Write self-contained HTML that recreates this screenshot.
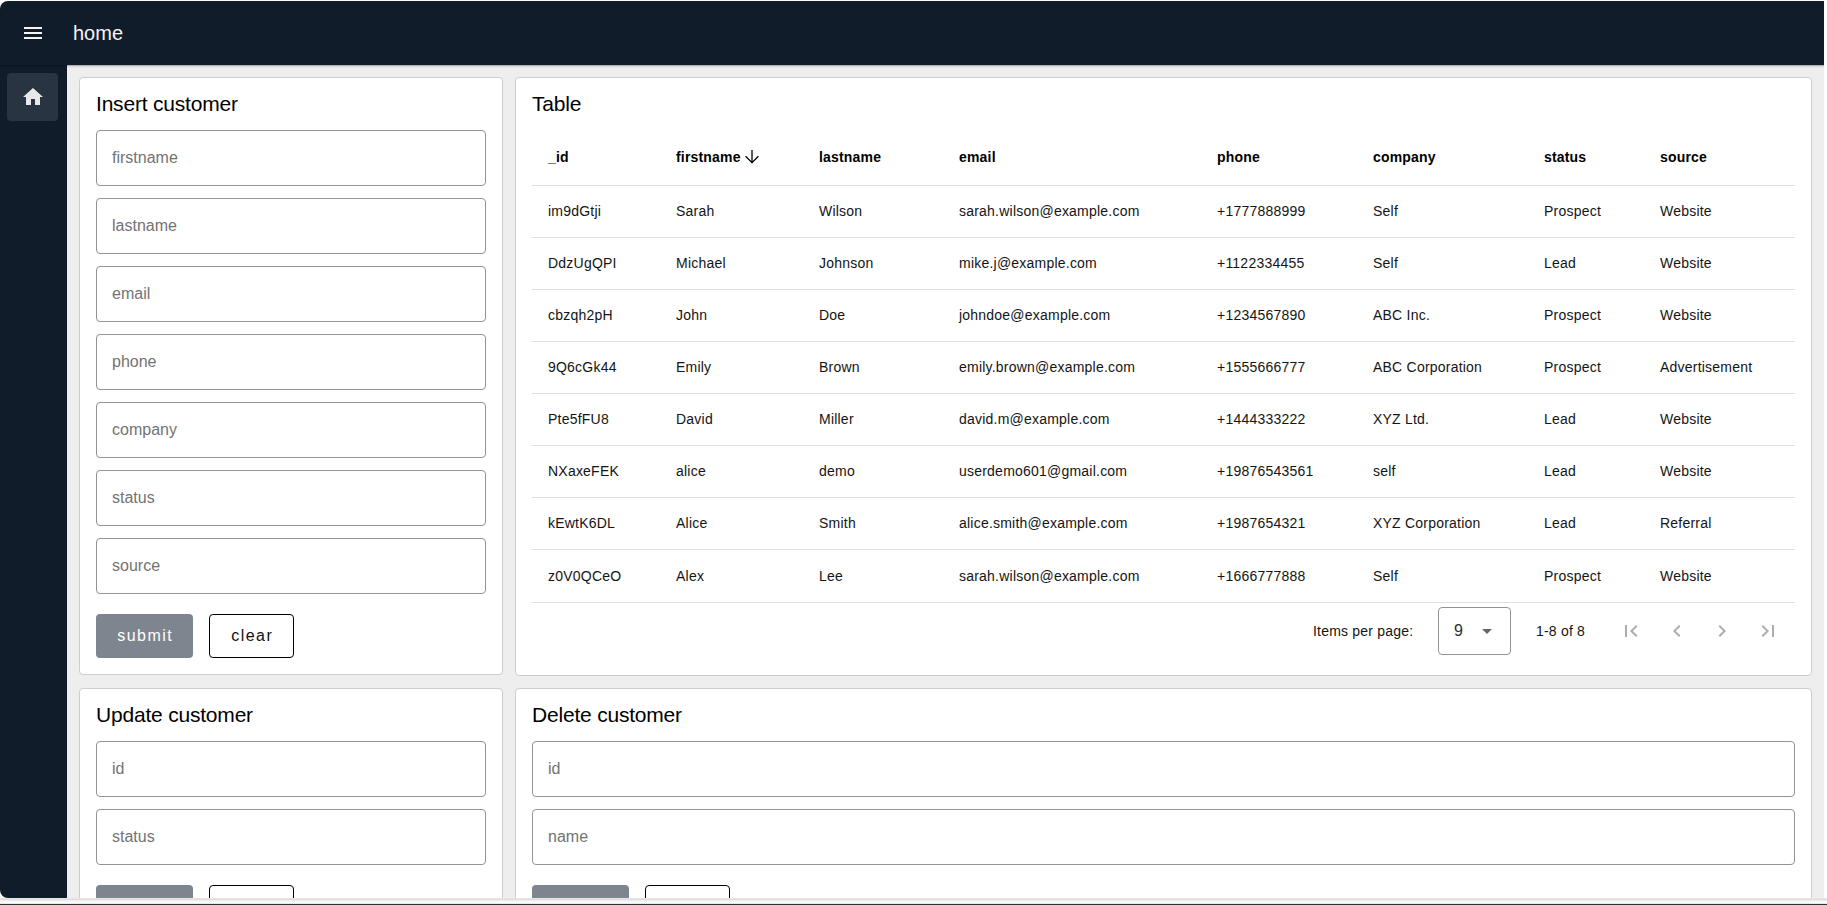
<!DOCTYPE html>
<html><head><meta charset="utf-8">
<style>
*{box-sizing:border-box;margin:0;padding:0}
html,body{width:1827px;height:905px;overflow:hidden;background:#fdfdfd;font-family:"Liberation Sans",sans-serif;color:#000}
.abs{position:absolute}
#win{position:absolute;left:0;top:1px;width:1824px;height:897px;border-radius:8px 0 0 8px;overflow:hidden;background:#eeeeee}
#hdr{position:absolute;left:0;top:0;width:1824px;height:64px;background:#111c2b}
#side{position:absolute;left:0;top:64px;width:67px;height:833px;background:#111c2b}
#homebtn{position:absolute;left:7px;top:8px;width:51px;height:48px;border-radius:4px;background:#283442}
#title{position:absolute;left:73px;top:22px;font-size:20px;line-height:20px;color:#f4f4f4;white-space:nowrap}
.card{position:absolute;background:#fff;border:1px solid #cdcdcd;border-radius:4px;overflow:hidden}
.ct{position:absolute;left:16px;top:14px;font-size:21px;line-height:24px;white-space:nowrap;letter-spacing:-0.2px}
.inp{position:absolute;height:56px;border:1px solid #939393;border-radius:4px;font-size:16px;line-height:54px;padding-left:15px;color:#737373;white-space:nowrap}
.btn{position:absolute;height:44px;border-radius:4px;padding-left:1.5px;font-size:16px;line-height:44px;text-align:center;letter-spacing:1.5px;white-space:nowrap}
.sub{background:#7d858f;color:#fff}
.clr{border:1px solid #000;color:#111;line-height:42px;border-radius:4px}
.tr{position:absolute;left:16px;width:1263px;border-bottom:1px solid #e0e0e0;font-size:14px;color:#141414;letter-spacing:0.22px}
.tr span{position:absolute;top:0;white-space:nowrap}
.th{font-weight:bold;color:#000;letter-spacing:0.18px}
.tr{line-height:51px}
.th{line-height:55px}
.pag{position:absolute;left:-516px;top:525px;width:1827px;height:56px;font-size:14px;line-height:56px;color:#141414;letter-spacing:0.2px}
.sel{position:absolute;left:1438px;top:4px;width:73px;height:48px;border:1px solid #939393;border-radius:4px;line-height:46px}
.pi{top:16px;fill:#abaeab}
#bot{position:absolute;left:0;top:898px;width:1827px;height:7px}
</style></head><body>
<div id="win">
  <div id="hdr">
    <svg class="abs" style="left:21px;top:20px" width="24" height="24" viewBox="0 0 24 24"><path fill="#f4f4f4" d="M3 18h18v-2H3v2zm0-5h18v-2H3v2zm0-7v2h18V6H3z"/></svg>
    <div id="title">home</div>
  </div>
  <div class="abs" style="left:67px;top:64px;width:1757px;height:1px;background:#b2b2b2"></div>
  <div class="abs" style="left:67px;top:65px;width:1757px;height:1px;background:#d9d9d9"></div>
  <div class="abs" style="left:67px;top:66px;width:1757px;height:1px;background:#e8e8e8"></div>
  <div id="side">
  <div class="abs" style="left:0;top:0;width:67px;height:1px;background:#0b1421"></div>
  <div class="abs" style="left:0;top:1px;width:67px;height:1px;background:#0f1927"></div>
    <div id="homebtn"><svg class="abs" style="left:14px;top:12px" width="24" height="24" viewBox="0 0 24 24"><path fill="#e8e8e8" d="M10 20v-6h4v6h5v-8h3L12 3 2 12h3v8z"/></svg></div>
  </div>

  <!-- Insert card -->
  <div class="card" style="left:79px;top:76px;width:424px;height:598px">
    <div class="ct">Insert customer</div>
    <div class="inp" style="left:16px;top:52px;width:390px">firstname</div>
    <div class="inp" style="left:16px;top:120px;width:390px">lastname</div>
    <div class="inp" style="left:16px;top:188px;width:390px">email</div>
    <div class="inp" style="left:16px;top:256px;width:390px">phone</div>
    <div class="inp" style="left:16px;top:324px;width:390px">company</div>
    <div class="inp" style="left:16px;top:392px;width:390px">status</div>
    <div class="inp" style="left:16px;top:460px;width:390px">source</div>
    <div class="btn sub" style="left:16px;top:536px;width:97px">submit</div>
    <div class="btn clr" style="left:129px;top:536px;width:85px">clear</div>
  </div>

  <!-- Table card -->
  <div class="card" style="left:515px;top:76px;width:1297px;height:599px">
    <div class="ct">Table</div>
<div class="tr th" style="top:52px;height:56px">
<span style="left:16px">_id</span>
<span style="left:144px">firstname</span>
<span style="left:287px">lastname</span>
<span style="left:427px">email</span>
<span style="left:685px">phone</span>
<span style="left:841px">company</span>
<span style="left:1012px">status</span>
<span style="left:1128px">source</span>
<svg class="abs" style="left:212px;top:18px" width="16" height="16" viewBox="0 0 16 16"><path d="M8 2v13M1.6 8.3L8 14.7 14.4 8.3" fill="none" stroke="#000" stroke-width="1.3"/></svg>
</div>
<div class="tr" style="top:108px;height:52px">
<span style="left:16px">im9dGtji</span>
<span style="left:144px">Sarah</span>
<span style="left:287px">Wilson</span>
<span style="left:427px">sarah.wilson@example.com</span>
<span style="left:685px">+1777888999</span>
<span style="left:841px">Self</span>
<span style="left:1012px">Prospect</span>
<span style="left:1128px">Website</span>
</div>
<div class="tr" style="top:160px;height:52px">
<span style="left:16px">DdzUgQPI</span>
<span style="left:144px">Michael</span>
<span style="left:287px">Johnson</span>
<span style="left:427px">mike.j@example.com</span>
<span style="left:685px">+1122334455</span>
<span style="left:841px">Self</span>
<span style="left:1012px">Lead</span>
<span style="left:1128px">Website</span>
</div>
<div class="tr" style="top:212px;height:52px">
<span style="left:16px">cbzqh2pH</span>
<span style="left:144px">John</span>
<span style="left:287px">Doe</span>
<span style="left:427px">johndoe@example.com</span>
<span style="left:685px">+1234567890</span>
<span style="left:841px">ABC Inc.</span>
<span style="left:1012px">Prospect</span>
<span style="left:1128px">Website</span>
</div>
<div class="tr" style="top:264px;height:52px">
<span style="left:16px">9Q6cGk44</span>
<span style="left:144px">Emily</span>
<span style="left:287px">Brown</span>
<span style="left:427px">emily.brown@example.com</span>
<span style="left:685px">+1555666777</span>
<span style="left:841px">ABC Corporation</span>
<span style="left:1012px">Prospect</span>
<span style="left:1128px">Advertisement</span>
</div>
<div class="tr" style="top:316px;height:52px">
<span style="left:16px">Pte5fFU8</span>
<span style="left:144px">David</span>
<span style="left:287px">Miller</span>
<span style="left:427px">david.m@example.com</span>
<span style="left:685px">+1444333222</span>
<span style="left:841px">XYZ Ltd.</span>
<span style="left:1012px">Lead</span>
<span style="left:1128px">Website</span>
</div>
<div class="tr" style="top:368px;height:52px">
<span style="left:16px">NXaxeFEK</span>
<span style="left:144px">alice</span>
<span style="left:287px">demo</span>
<span style="left:427px">userdemo601@gmail.com</span>
<span style="left:685px">+19876543561</span>
<span style="left:841px">self</span>
<span style="left:1012px">Lead</span>
<span style="left:1128px">Website</span>
</div>
<div class="tr" style="top:420px;height:52px">
<span style="left:16px">kEwtK6DL</span>
<span style="left:144px">Alice</span>
<span style="left:287px">Smith</span>
<span style="left:427px">alice.smith@example.com</span>
<span style="left:685px">+1987654321</span>
<span style="left:841px">XYZ Corporation</span>
<span style="left:1012px">Lead</span>
<span style="left:1128px">Referral</span>
</div>
<div class="tr" style="top:472px;height:53px;line-height:52px">
<span style="left:16px">z0V0QCeO</span>
<span style="left:144px">Alex</span>
<span style="left:287px">Lee</span>
<span style="left:427px">sarah.wilson@example.com</span>
<span style="left:685px">+1666777888</span>
<span style="left:841px">Self</span>
<span style="left:1012px">Prospect</span>
<span style="left:1128px">Website</span>
</div>

    <div class="pag">
      <span class="abs" style="left:1313px;top:0">Items per page:</span>
      <div class="sel"><span class="abs" style="left:15px;top:0;font-size:16px;color:#2e2e2e">9</span><svg class="abs" style="left:43px;top:21px" width="10" height="5" viewBox="0 0 10 5"><path fill="#666" d="M0 0h10L5 5z"/></svg></div>
      <span class="abs" style="left:1536px;top:0">1-8 of 8</span>
      <svg class="abs pi" style="left:1619px" width="24" height="24" viewBox="0 0 24 24"><path d="M18.41 16.59L13.82 12l4.59-4.59L17 6l-6 6 6 6zM6 6h2v12H6z"/></svg>
      <svg class="abs pi" style="left:1665px" width="24" height="24" viewBox="0 0 24 24"><path d="M15.41 7.41L14 6l-6 6 6 6 1.41-1.41L10.83 12z"/></svg>
      <svg class="abs pi" style="left:1710px" width="24" height="24" viewBox="0 0 24 24"><path d="M10 6L8.59 7.41 13.17 12l-4.58 4.59L10 18l6-6z"/></svg>
      <svg class="abs pi" style="left:1756px" width="24" height="24" viewBox="0 0 24 24"><path d="M5.59 7.41L10.18 12l-4.59 4.59L7 18l6-6-6-6zM16 6h2v12h-2z"/></svg>
    </div>
  </div>

  <!-- Update card -->
  <div class="card" style="left:79px;top:687px;width:424px;height:260px">
    <div class="ct">Update customer</div>
    <div class="inp" style="left:16px;top:52px;width:390px">id</div>
    <div class="inp" style="left:16px;top:120px;width:390px">status</div>
    <div class="btn sub" style="left:16px;top:196px;width:97px"></div>
    <div class="btn clr" style="left:129px;top:196px;width:85px"></div>
  </div>

  <!-- Delete card -->
  <div class="card" style="left:515px;top:687px;width:1297px;height:260px">
    <div class="ct">Delete customer</div>
    <div class="inp" style="left:16px;top:52px;width:1263px">id</div>
    <div class="inp" style="left:16px;top:120px;width:1263px">name</div>
    <div class="btn sub" style="left:16px;top:196px;width:97px"></div>
    <div class="btn clr" style="left:129px;top:196px;width:85px"></div>
  </div>
</div>
<div id="bot">
  <div class="abs" style="left:0;top:0;width:1827px;height:1px;background:#e6e6e6"></div>
  <div class="abs" style="left:0;top:1px;width:1827px;height:1px;background:#dedede"></div>
  <div class="abs" style="left:0;top:2px;width:1827px;height:1px;background:#eeeeee"></div>
  <div class="abs" style="left:0;top:3px;width:1827px;height:1px;background:#f6f6f6"></div>
  <div class="abs" style="left:0;top:4px;width:1827px;height:1px;background:#fcfcfc"></div>
  <div class="abs" style="left:0;top:5px;width:1827px;height:1px;background:#e8e8e8"></div>
  <div class="abs" style="left:0;top:6px;width:1827px;height:1px;background:#303030"></div>
</div>
</body></html>
